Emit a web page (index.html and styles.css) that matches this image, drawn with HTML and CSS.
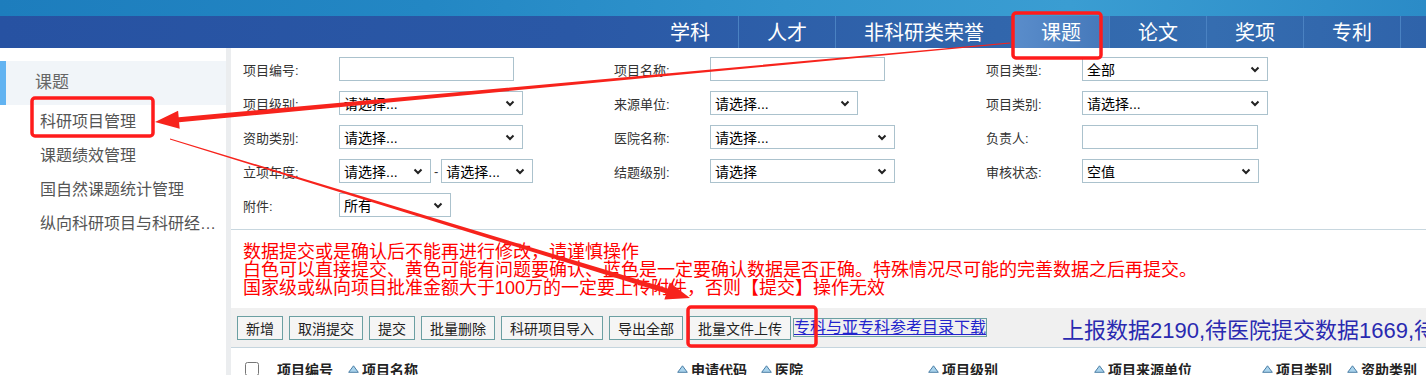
FILE: index.html
```html
<!DOCTYPE html>
<html lang="zh-CN">
<head>
    <meta charset="UTF-8">
    <meta name="viewport" content="width=device-width, initial-scale=1.0">
    <title>科研项目管理</title>
    <link rel="stylesheet" href="styles.css">
</head>
<body>
    <!-- 顶部导航 -->
    <header class="top">
        <div class="sky"></div>
        <nav class="nav">
            <a class="nav-item">学科</a>
            <a class="nav-item">人才</a>
            <a class="nav-item">非科研类荣誉</a>
            <a class="nav-item active">课题</a>
            <a class="nav-item">论文</a>
            <a class="nav-item">奖项</a>
            <a class="nav-item">专利</a>
        </nav>
    </header>

    <div class="page">
        <!-- 左侧菜单 -->
        <aside class="side">
            <div class="side-head">课题</div>
            <ul class="side-menu">
                <li>科研项目管理</li>
                <li>课题绩效管理</li>
                <li>国自然课题统计管理</li>
                <li>纵向科研项目与科研经费管理</li>
            </ul>
        </aside>

        <main class="main">
            <!-- 查询条件 -->
            <div class="filters">
                <div class="field"><label>项目编号:</label><span class="box w175"></span></div>
                <div class="field"><label>项目名称:</label><span class="box w175"></span></div>
                <div class="field"><label>项目类型:</label><span class="box sel w186">全部<svg class="chev" viewBox="0 0 10 7"><path d="M1.5 1.5 5 5 8.5 1.5"/></svg></span></div>

                <div class="field"><label>项目级别:</label><span class="box sel w184">请选择...<svg class="chev" viewBox="0 0 10 7"><path d="M1.5 1.5 5 5 8.5 1.5"/></svg></span></div>
                <div class="field"><label>来源单位:</label><span class="box sel w148">请选择...<svg class="chev" viewBox="0 0 10 7"><path d="M1.5 1.5 5 5 8.5 1.5"/></svg></span></div>
                <div class="field"><label>项目类别:</label><span class="box sel w186">请选择...<svg class="chev" viewBox="0 0 10 7"><path d="M1.5 1.5 5 5 8.5 1.5"/></svg></span></div>

                <div class="field"><label>资助类别:</label><span class="box sel w184">请选择...<svg class="chev" viewBox="0 0 10 7"><path d="M1.5 1.5 5 5 8.5 1.5"/></svg></span></div>
                <div class="field"><label>医院名称:</label><span class="box sel w185">请选择...<svg class="chev" viewBox="0 0 10 7"><path d="M1.5 1.5 5 5 8.5 1.5"/></svg></span></div>
                <div class="field"><label>负责人:</label><span class="box w176"></span></div>

                <div class="field"><label>立项年度:</label><span class="box sel w92">请选择...<svg class="chev" viewBox="0 0 10 7"><path d="M1.5 1.5 5 5 8.5 1.5"/></svg></span><span class="dash">-</span><span class="box sel w92">请选择...<svg class="chev" viewBox="0 0 10 7"><path d="M1.5 1.5 5 5 8.5 1.5"/></svg></span></div>
                <div class="field"><label>结题级别:</label><span class="box sel w185">请选择<svg class="chev" viewBox="0 0 10 7"><path d="M1.5 1.5 5 5 8.5 1.5"/></svg></span></div>
                <div class="field"><label>审核状态:</label><span class="box sel w177">空值<svg class="chev" viewBox="0 0 10 7"><path d="M1.5 1.5 5 5 8.5 1.5"/></svg></span></div>

                <div class="field"><label>附件:</label><span class="box sel w112">所有<svg class="chev" viewBox="0 0 10 7"><path d="M1.5 1.5 5 5 8.5 1.5"/></svg></span></div>
            </div>

            <!-- 提示 -->
            <div class="notice">
                <div>数据提交或是确认后不能再进行修改，请谨慎操作</div>
                <div>白色可以直接提交、黄色可能有问题要确认、蓝色是一定要确认数据是否正确。特殊情况尽可能的完善数据之后再提交。</div>
                <div>国家级或纵向项目批准金额大于100万的一定要上传附件，否则【提交】操作无效</div>
            </div>

            <!-- 操作按钮 -->
            <div class="toolbar">
                <button class="btn">新增</button>
                <button class="btn">取消提交</button>
                <button class="btn">提交</button>
                <button class="btn">批量删除</button>
                <button class="btn">科研项目导入</button>
                <button class="btn">导出全部</button>
                <button class="btn">批量文件上传</button>
                <a class="dl-link">专科与亚专科参考目录下载</a>
                <span class="stats">上报数据2190,待医院提交数据1669,待卫健委审核数据521</span>
            </div>

            <!-- 表头 -->
            <div class="grid-head">
                <div class="col c0"><input type="checkbox" class="chk"></div>
                <div class="col c1">项目编号</div>
                <div class="col c2"><svg class="tri" viewBox="0 0 11 8"><path d="M5.5 0.8 10.3 7.3H0.7Z"/></svg>项目名称</div>
                <div class="col c3"><svg class="tri" viewBox="0 0 11 8"><path d="M5.5 0.8 10.3 7.3H0.7Z"/></svg>申请代码</div>
                <div class="col c4"><svg class="tri" viewBox="0 0 11 8"><path d="M5.5 0.8 10.3 7.3H0.7Z"/></svg>医院</div>
                <div class="col c5"><svg class="tri" viewBox="0 0 11 8"><path d="M5.5 0.8 10.3 7.3H0.7Z"/></svg>项目级别</div>
                <div class="col c6"><svg class="tri" viewBox="0 0 11 8"><path d="M5.5 0.8 10.3 7.3H0.7Z"/></svg>项目来源单位</div>
                <div class="col c7"><svg class="tri" viewBox="0 0 11 8"><path d="M5.5 0.8 10.3 7.3H0.7Z"/></svg>项目类别</div>
                <div class="col c8"><svg class="tri" viewBox="0 0 11 8"><path d="M5.5 0.8 10.3 7.3H0.7Z"/></svg>资助类别</div>
            </div>
        </main>
    </div>

    <!-- 截图标注（红框和箭头） -->
    <svg class="marks" viewBox="0 0 1426 375">
        <rect x="1013" y="13" width="88" height="45" rx="3"/>
        <rect x="32" y="98" width="121" height="38" rx="3"/>
        <rect x="688" y="307" width="128" height="39" rx="3"/>
        <polygon class="arrow" points="1009.9,42.5 178.7,117.3 178.1,110.8 155,122 179.7,128.8 179.1,122.3 1010.1,43.5"/>
        <polygon class="arrow" points="169.9,139.5 666.3,293.4 664.4,299.6 690,298 669.7,282.4 667.8,288.6 170.1,138.5"/>
    </svg>
</body>
</html>
```

FILE: styles.css
```css
body {
    margin: 0;
    font-family: "Liberation Sans", "Noto Sans CJK SC", sans-serif;
    color: #333;
    background: #fff;
    position: relative;
}

/* 顶部 */
.top {
    height: 48px;
}
.sky {
    height: 16px;
    background: linear-gradient(90deg, #1d7dbd 0%, #2387c4 30%, #3195cd 55%, #3a9dd2 75%, #2b8bc7 100%);
}
.nav {
    height: 32px;
    display: flex;
    justify-content: flex-end;
    padding-right: 25px;
    background: linear-gradient(90deg, #2752a2 0%, #2a58a6 40%, #3166ac 70%, #356db0 85%, #2f63aa 100%);
}
.nav-item {
    padding: 0 28px;
    line-height: 32px;
    font-size: 20px;
    color: #fff;
    border-right: 1px solid #4a82c2;
    font-family: "Noto Sans CJK SC", sans-serif;
}
.nav-item.active {
    background: linear-gradient(90deg, #5a8dcb, #4477b9);
}

.page {
    display: flex;
}

/* 左侧菜单 */
.side {
    width: 226px;
    flex: none;
    border-right: 5px solid #ebedef;
    padding-top: 13px;
    min-height: 314px;
}
.side-head {
    height: 44px;
    line-height: 44px;
    padding-left: 35px;
    font-size: 17px;
    color: #666;
    background: #f1f5f9;
    border-left: 6px solid #62b3f1;
    padding-left: 29px;
}
.side-menu {
    list-style: none;
    margin: 0;
    padding: 0;
}
.side-menu li {
    padding-left: 40px;
    width: 178px;
    line-height: 34px;
    font-size: 16px;
    color: #555;
    white-space: nowrap;
    overflow: hidden;
    text-overflow: ellipsis;
}

/* 主区域 */
.main {
    flex: 1;
    min-width: 0;
}
.filters {
    display: grid;
    grid-template-columns: 371px 372px 1fr;
    row-gap: 10px;
    padding: 9px 12px 12px;
    border-bottom: 1px solid #c8d7df;
}
.field {
    display: flex;
    align-items: center;
    height: 24px;
}
.field label {
    width: 96px;
    font-size: 13px;
    color: #333;
}
.box {
    height: 24px;
    box-sizing: border-box;
    border: 1px solid #abc2cd;
    background: #fff;
}
.sel {
    display: flex;
    align-items: center;
    justify-content: space-between;
    padding: 0 7px 0 4px;
    font-size: 14px;
    color: #000;
}
.chev {
    width: 10px;
    height: 7px;
    fill: none;
    stroke: #222;
    stroke-width: 2;
}
.dash {
    font-size: 13px;
    margin: 0 3px;
}
.w92 { width: 92px; }
.w112 { width: 112px; }
.w148 { width: 148px; }
.w175 { width: 175px; }
.w176 { width: 176px; }
.w177 { width: 177px; }
.w184 { width: 184px; }
.w185 { width: 185px; }
.w186 { width: 186px; }

.notice {
    padding: 13px 12px 11px;
    font-size: 18px;
    line-height: 18px;
    color: #f00;
    white-space: nowrap;
}

.toolbar {
    display: flex;
    align-items: center;
    height: 39px;
    padding: 0 6px;
    background: #f0f0f0;
    border-bottom: 1px solid #c5d5de;
    white-space: nowrap;
    overflow: hidden;
}
.btn {
    height: 24px;
    padding: 0 8px;
    margin-right: 6px;
    border: 1px solid #6b9fa2;
    background: #f5f5f5;
    font-family: "Liberation Sans", "Noto Sans CJK SC", sans-serif;
    font-size: 14px;
    color: #222;
}
.btn:last-of-type {
    margin-right: 2px;
}
.dl-link {
    border: 1px solid #6b9fa2;
    font-size: 16px;
    line-height: 17px;
    color: #2323cc;
    text-decoration: underline;
}
.stats {
    margin-left: 75px;
    font-size: 22px;
    color: #2a2ab0;
}

/* 表头 */
.grid-head {
    display: flex;
    align-items: center;
    height: 42px;
    font-size: 14px;
    font-weight: bold;
    color: #222;
    white-space: nowrap;
}
.col {
    display: flex;
    align-items: center;
    padding-left: 6px;
    box-sizing: border-box;
}
.c0 { width: 40px; padding-left: 14px; }
.c1 { width: 71px; }
.c2 { width: 329px; }
.c3 { width: 84px; }
.c4 { width: 167px; }
.c5 { width: 166px; }
.c6 { width: 168px; }
.c7 { width: 85px; }
.c8 { flex: 1; }
.chk {
    width: 14px;
    height: 14px;
    margin: 0;
}
.tri {
    width: 11px;
    height: 8px;
    margin-right: 3px;
    fill: #a9d3ec;
    stroke: #4c7fa6;
    stroke-width: 1;
}

/* 标注层 */
.marks {
    position: absolute;
    left: 0;
    top: 0;
    width: 1426px;
    height: 375px;
    pointer-events: none;
}
.marks rect {
    fill: none;
    stroke: #ff1b1b;
    stroke-width: 3.5;
}
.marks .arrow {
    fill: #f7231c;
}
```
